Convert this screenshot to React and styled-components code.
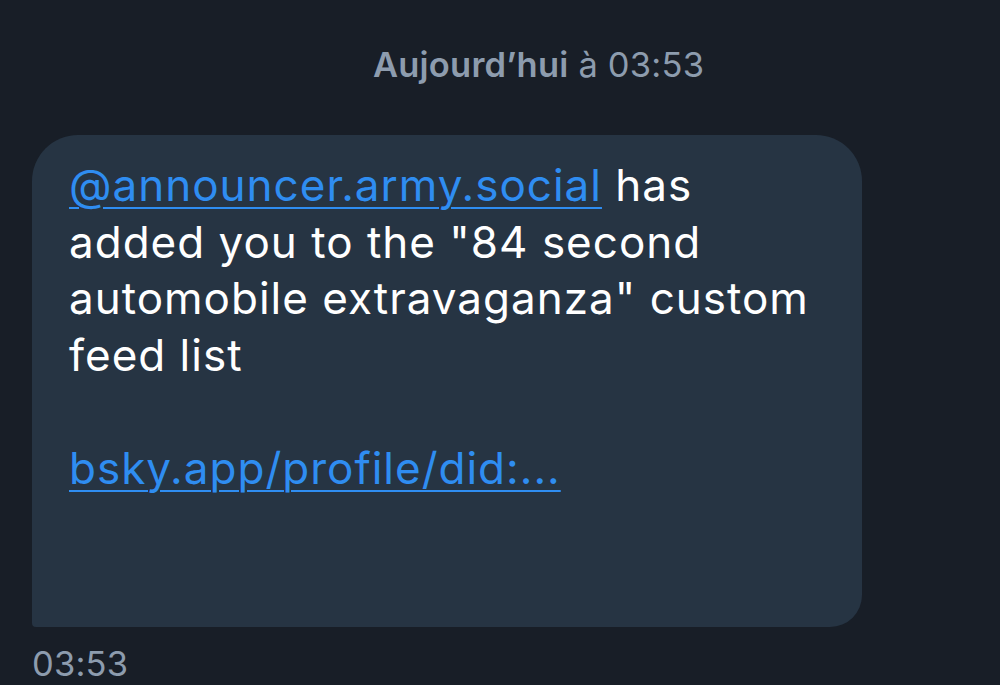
import React from 'react';
import styled, { createGlobalStyle } from 'styled-components';

const Global = createGlobalStyle`
  html, body {
    margin: 0;
    padding: 0;
    background: #181e27;
  }
  body {
    font-family: Inter, "Noto Sans", sans-serif;
    -webkit-font-smoothing: antialiased;
  }
`;

const Page = styled.div`
  width: 1000px;
  height: 685px;
  overflow: hidden;
  display: flex;
  flex-direction: column;
  padding: 0 0 0 32px;
  box-sizing: border-box;
`;

const DateLine = styled.div`
  padding-top: 44px;
  padding-left: 341px;
  font-size: 34.5px;
  line-height: 42px;
  color: #8d9cae;
  white-space: nowrap;
  letter-spacing: 0.2px;
  b {
    font-weight: 600;
  }
`;

const Bubble = styled.div`
  margin-top: 49px;
  width: 830px;
  height: 495px;
  box-sizing: border-box;
  background: #263443;
  border-radius: 46px 46px 32px 4px;
  padding: 22px 37px;
  color: #ffffff;
  font-size: 44px;
  letter-spacing: 1px;
  line-height: 56.5px;
`;

const Link = styled.a`
  color: #2f8df1;
  text-decoration: underline;
  text-decoration-thickness: 2px;
  text-underline-offset: 6px;
`;

const Time = styled.div`
  margin-top: 16px;
  font-size: 34.5px;
  line-height: 42px;
  letter-spacing: 0.2px;
  color: #8d9cae;
`;

export default function App() {
  return (
    <>
      <Global />
      <Page>
        <DateLine>
          <b>Aujourd’hui</b> à 03:53
        </DateLine>
        <Bubble>
          <Link>@announcer.army.social</Link> has added you to the "84 second automobile extravaganza" custom feed list
          <br />
          <br />
          <Link>bsky.app/profile/did:...</Link>
        </Bubble>
        <Time>03:53</Time>
      </Page>
    </>
  );
}
